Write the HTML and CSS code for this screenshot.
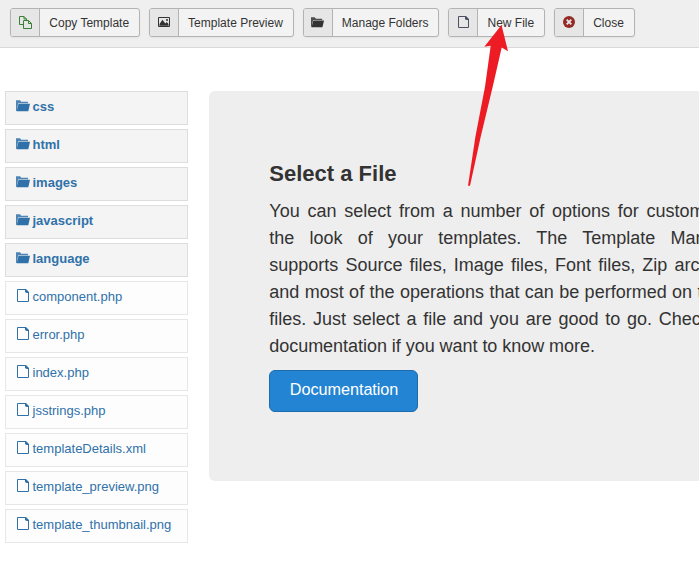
FILE: index.html
```html
<!DOCTYPE html>
<html lang="en">
<head>
<meta charset="utf-8">
<title>Template Manager</title>
<link rel="stylesheet" href="styles.css">
</head>
<body>
<svg class="symbols" aria-hidden="true">
  <symbol id="folder" viewBox="0 0 14 12">
    <path d="M0 11V.3h4L5.300 1.800H12V3.200H2.200L.7 11z" opacity=".85"/>
    <path d="M2.500 3.800H14L12.300 11.200H.6z"/>
  </symbol>
  <symbol id="file" viewBox="0 0 12 13">
    <path d="M.5.5h8l3 3v9H.5z" fill="none" stroke="currentColor"/>
    <path d="M8 0h1l3 3v1H9.500L8 3z"/>
  </symbol>
</svg>
<header class="toolbar">
  <button class="btn copy"><span class="icon"><svg width="13" height="13" viewBox="0 0 13 13"><path fill="none" stroke="currentColor" stroke-width="1" d="M4.500 8.500h-4v-8H5L7.500 3v1.500M5 .5V3h2.500M4.500 4.500H9.500l3 3v5h-8zM9.500 4.500v3h3"/></svg></span><span class="label">Copy Template</span></button>
  <button class="btn"><span class="icon"><svg width="12" height="10" viewBox="0 0 12 10"><path d="M.5.5h11v9H.5z" fill="none" stroke="currentColor"/><path d="M1.500 8.800V7L4.500 2.700 7.300 6.500 8.700 5l1.800 2v1.800z"/><circle cx="9" cy="3" r="1"/></svg></span><span class="label">Template Preview</span></button>
  <button class="btn"><span class="icon"><svg width="13" height="11" viewBox="0 0 14 12" preserveAspectRatio="none"><use href="#folder" width="14" height="12"/></svg></span><span class="label">Manage Folders</span></button>
  <button class="btn new"><span class="icon"><svg width="11" height="12" viewBox="0 0 11 12"><path d="M.5.5h7l3 3v8H.5z" fill="none" stroke="currentColor"/><path d="M7 0h1l3 3v1H8L7 3z"/></svg></span><span class="label">New File</span></button>
  <button class="btn close"><span class="icon"><svg width="12" height="12" viewBox="0 0 12 12"><circle cx="6" cy="6" r="6"/><path d="M3.700 3.700l4.600 4.600M8.300 3.700L3.700 8.300" stroke="#e6e6e6" stroke-width="1.900"/></svg></span><span class="label">Close</span></button>
</header>
<main class="content">
  <ul class="tree">
    <li class="folder"><a><svg><use href="#folder"/></svg>css</a></li>
    <li class="folder"><a><svg><use href="#folder"/></svg>html</a></li>
    <li class="folder"><a><svg><use href="#folder"/></svg>images</a></li>
    <li class="folder"><a><svg><use href="#folder"/></svg>javascript</a></li>
    <li class="folder"><a><svg><use href="#folder"/></svg>language</a></li>
    <li class="file"><a><svg><use href="#file"/></svg>component.php</a></li>
    <li class="file"><a><svg><use href="#file"/></svg>error.php</a></li>
    <li class="file"><a><svg><use href="#file"/></svg>index.php</a></li>
    <li class="file"><a><svg><use href="#file"/></svg>jsstrings.php</a></li>
    <li class="file"><a><svg><use href="#file"/></svg>templateDetails.xml</a></li>
    <li class="file"><a><svg><use href="#file"/></svg>template_preview.png</a></li>
    <li class="file"><a><svg><use href="#file"/></svg>template_thumbnail.png</a></li>
  </ul>
  <section class="hero">
    <h2>Select a File</h2>
    <p><span>You can select from a number of options for customising</span> <span>the look of your templates. The Template Manager</span> <span>supports Source files, Image files, Font files, Zip archives</span> <span>and most of the operations that can be performed on those</span> <span>files. Just select a file and you are good to go. Check the</span> <span class="last">documentation if you want to know more.</span></p>
    <a class="docs">Documentation</a>
  </section>
</main>
<svg class="arrow" viewBox="0 0 40 162" aria-hidden="true"><path d="M33.500 0L40 26.300 33.700 22.600 24.700 61.700 12.700 111.700 2 160.700H0L7.400 111.700 17 61.700 22.700 20.700 16.300 21.700z"/></svg>
</body>
</html>
```
FILE: styles.css
```css
* { box-sizing: border-box; }

body {
  margin: 0;
  width: 699px;
  height: 563px;
  overflow: hidden;
  background: #fff;
  color: #333;
  font: 13px/18px "Liberation Sans", Arial, sans-serif;
}

.symbols { position: absolute; width: 0; height: 0; }
svg { fill: currentColor; }

.toolbar {
  display: flex;
  align-items: flex-start;
  gap: 9px;
  height: 48px;
  padding: 8px 10px;
  background: #efefef;
  border-bottom: 1px solid #d9d9d9;
}

.btn {
  display: flex;
  flex: none;
  height: 29px;
  padding: 0;
  overflow: hidden;
  color: #333;
  background: #f3f3f3;
  border: 1px solid #b3b3b3;
  border-radius: 3px;
  box-shadow: 0 1px 2px rgba(0, 0, 0, .05);
  font: 12px/29px "Liberation Sans", Arial, sans-serif;
}

.icon {
  display: flex;
  align-items: center;
  justify-content: center;
  width: 29px;
  height: 27px;
  padding-bottom: 1px;
  background: #e6e6e6;
  border-right: 1px solid #b3b3b3;
}

.label { padding: 0 9.7px 0 9.3px; }
.copy .icon { color: #378137; }
.new .icon { color: #4c5060; }
.close .icon { color: #942a25; }

.content { display: flex; padding: 43px 0 0 5px; }

.tree {
  flex: none;
  display: flex;
  flex-direction: column;
  gap: 4px;
  width: 183px;
  margin: 0 21px 0 0;
  padding: 0;
  list-style: none;
}

.tree li {
  height: 34px;
  padding: 5px 10px;
  border: 1px solid #e7e7e7;
  background: #fdfdfd;
  color: #3071a9;
}

.tree .folder { background: #f4f4f4; border-color: #ddd; font-weight: bold; }
.tree a { display: flex; align-items: flex-start; line-height: 19px; }
.folder svg { width: 14px; height: 12px; margin: 3px 2.500px 0 0; }
.file svg { width: 12px; height: 13px; margin: 2px 3.500px 0 1px; }

.hero {
  flex: none;
  width: 592.5px;
  height: 390px;
  padding: 60px 60px 60px 60.3px;
  border-radius: 6px;
  background: #eee;
  font-size: 18px;
  line-height: 27px;
}

.hero h2 { margin: 9px 0 11px; font-size: 22px; line-height: 27px; }
.hero p { margin: 0 0 10px; }
.hero span { display: block; text-align: justify; text-align-last: justify; }
.hero .last { text-align-last: left; letter-spacing: -.04px; }

.docs {
  display: inline-block;
  height: 42px;
  padding: 0 18.5px 0 19.5px;
  color: #fff;
  background: #2384d3;
  border: 1px solid #1c6bac;
  border-radius: 6px;
  font-size: 16.25px;
  letter-spacing: -.06px;
  line-height: 37px;
}

.arrow {
  position: absolute;
  left: 468px;
  top: 25px;
  width: 40px;
  height: 162px;
  fill: #ed1c24;
}
```
